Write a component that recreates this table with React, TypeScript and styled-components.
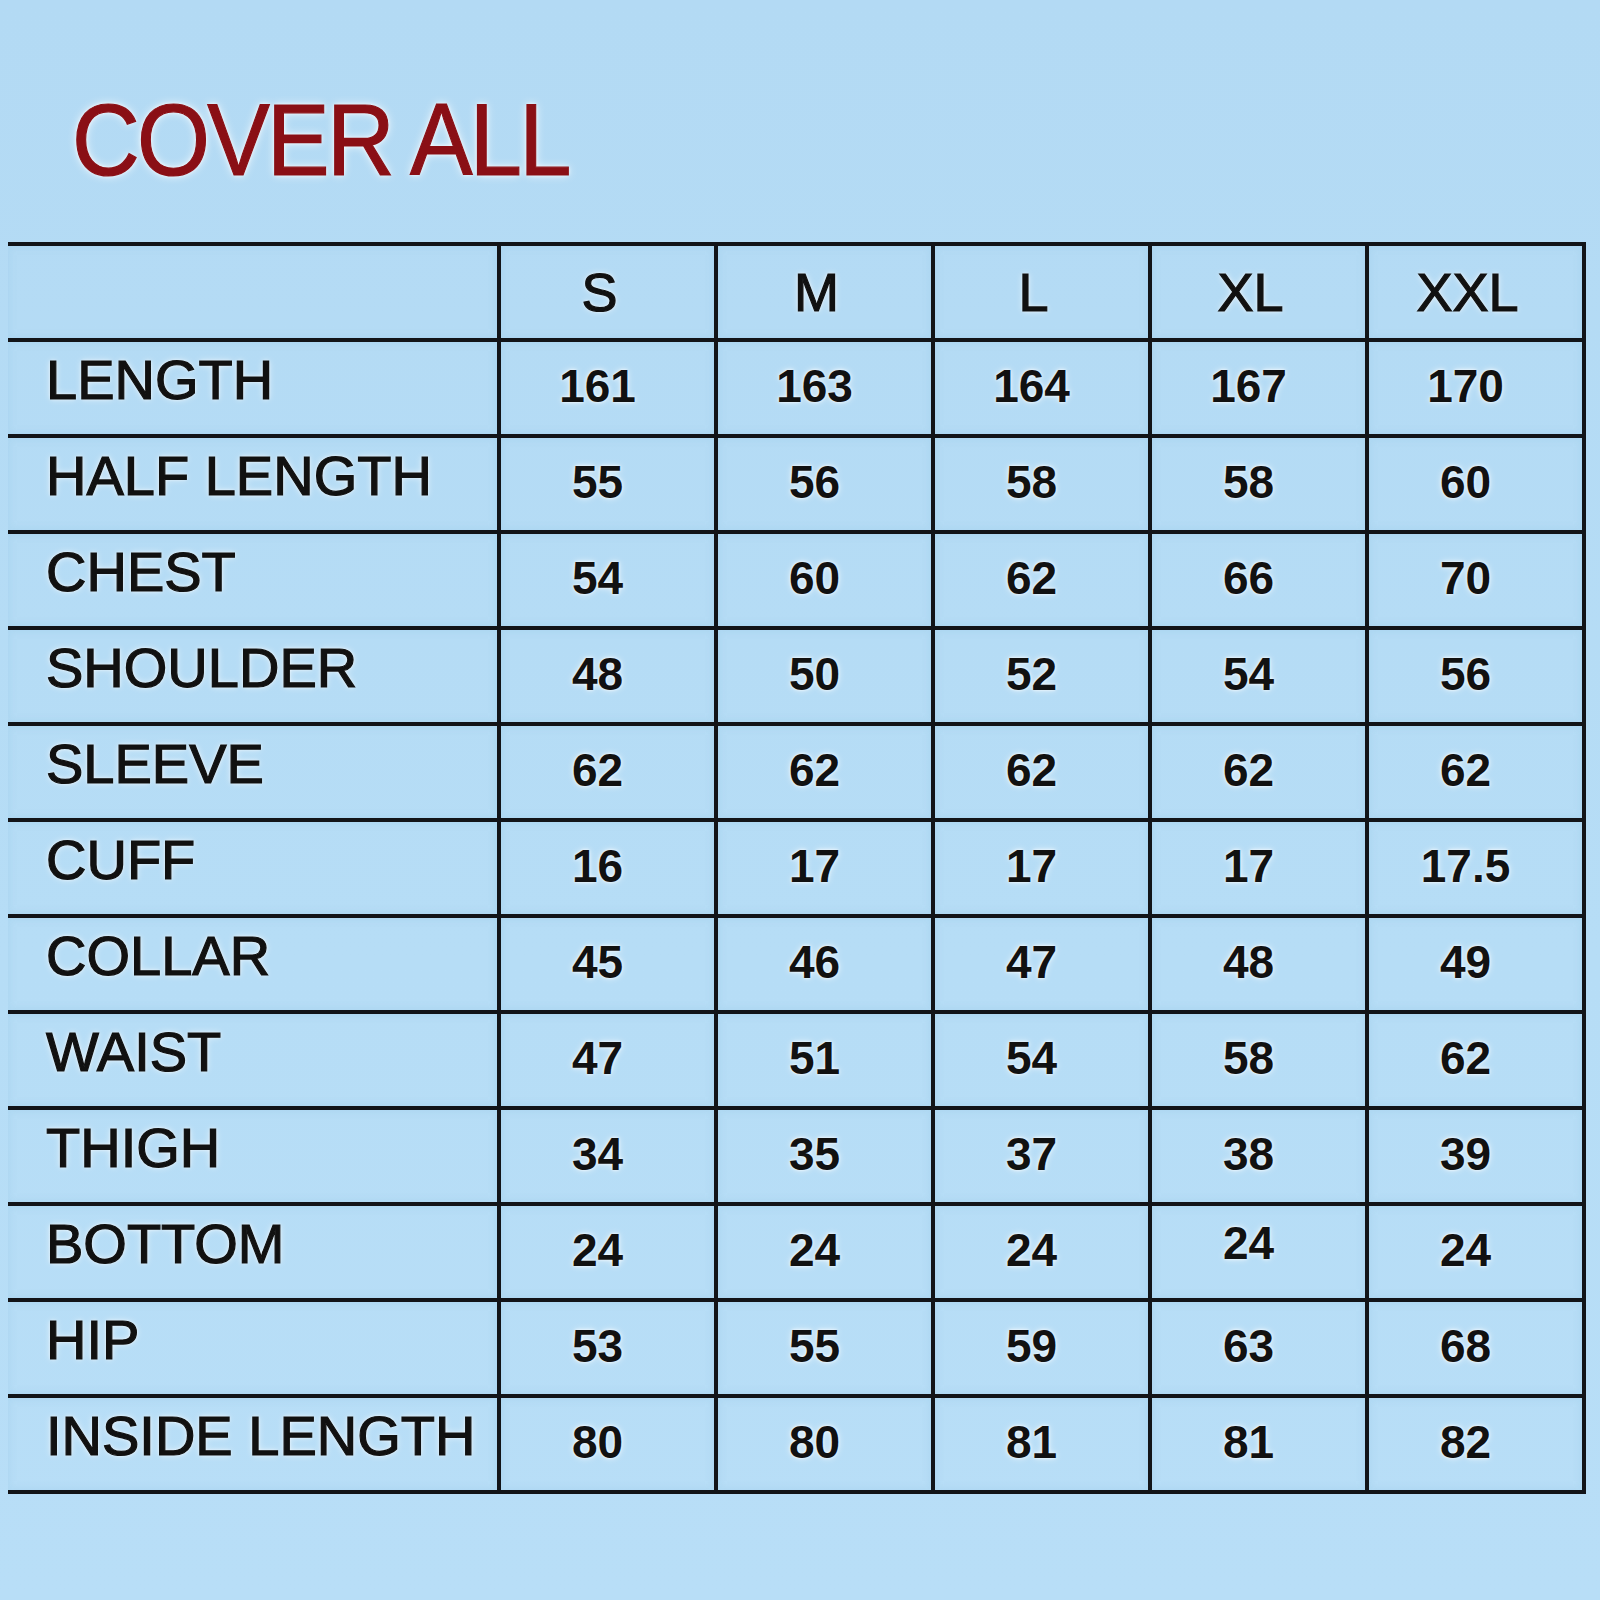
import React from 'react'
import styled, { createGlobalStyle } from 'styled-components'

const sizes = ['S', 'M', 'L', 'XL', 'XXL']

const rows: { label: string; values: string[]; lift?: number }[] = [
  { label: 'LENGTH', values: ['161', '163', '164', '167', '170'] },
  { label: 'HALF LENGTH', values: ['55', '56', '58', '58', '60'] },
  { label: 'CHEST', values: ['54', '60', '62', '66', '70'] },
  { label: 'SHOULDER', values: ['48', '50', '52', '54', '56'] },
  { label: 'SLEEVE', values: ['62', '62', '62', '62', '62'] },
  { label: 'CUFF', values: ['16', '17', '17', '17', '17.5'] },
  { label: 'COLLAR', values: ['45', '46', '47', '48', '49'] },
  { label: 'WAIST', values: ['47', '51', '54', '58', '62'] },
  { label: 'THIGH', values: ['34', '35', '37', '38', '39'] },
  { label: 'BOTTOM', values: ['24', '24', '24', '24', '24'], lift: 3 },
  { label: 'HIP', values: ['53', '55', '59', '63', '68'] },
  { label: 'INSIDE LENGTH', values: ['80', '80', '81', '81', '82'] },
]

export default () => {
  return (
    <Page>
      <GlobalStyle />
      <Title>COVER ALL</Title>
      <Chart>
        <thead>
          <tr>
            <Corner />
            {sizes.map((s) => (
              <SizeHead key={s}>{s}</SizeHead>
            ))}
          </tr>
        </thead>
        <tbody>
          {rows.map((row) => (
            <tr key={row.label}>
              <Label>{row.label}</Label>
              {row.values.map((v, i) => (
                <Value key={i} $raised={row.lift === i}>
                  {v}
                </Value>
              ))}
            </tr>
          ))}
        </tbody>
      </Chart>
    </Page>
  )
}

const GlobalStyle = createGlobalStyle`
  html, body {
    margin: 0;
    padding: 0;
    background: #b5dcf5;
  }
  body {
    font-family: "Liberation Sans", Arial, sans-serif;
  }
`

const halo = `0 0 3px rgba(255, 255, 255, 0.95), 0 0 7px rgba(255, 255, 255, 0.7)`
const line = `4px solid #121418`

const Page = styled.div`
  width: 1600px;
  height: 1600px;
  box-sizing: border-box;
  padding: 89px 0 0 8px;
  background: linear-gradient(180deg, #b3daf4 0%, #b6ddf6 60%, #b8def7 100%);
`

const Title = styled.h1`
  margin: 0 0 51px 64px;
  font-family: "Liberation Sans", Arial, sans-serif;
  font-size: 102px;
  line-height: 102px;
  font-weight: 400;
  letter-spacing: -3px;
  color: #8a0f15;
  -webkit-text-stroke: 1.2px #8a0f15;
  transform: scaleX(0.92);
  transform-origin: left center;
  text-shadow: 0 0 4px #fff, 0 0 10px rgba(255, 255, 255, 0.9);
`

const Chart = styled.table`
  border-collapse: collapse;
  table-layout: fixed;
  width: 1576px;

  td,
  th {
    height: 96px;
    padding: 0;
    border-top: ${line};
    border-bottom: ${line};
    box-sizing: border-box;
    box-shadow: inset 0 0 5px 3px rgba(160, 205, 235, 0.35);
  }

  th + th,
  td + td {
    border-left: ${line};
  }

  th:last-child,
  td:last-child {
    border-right: ${line};
  }
`

const Corner = styled.th`
  width: 491px;
`

const SizeHead = styled.th`
  width: 217px;
  padding-right: 16px !important;
  font-size: 54px;
  font-weight: 400;
  color: #111;
  text-align: center;
  vertical-align: middle;
  -webkit-text-stroke: 1.2px #111;
  text-shadow: ${halo};
`

const Label = styled.td`
  padding: 0 0 18px 38px !important;
  font-size: 56px;
  font-weight: 400;
  color: #111;
  white-space: nowrap;
  -webkit-text-stroke: 1.2px #111;
  text-shadow: ${halo};
`

const Value = styled.td<{ $raised?: boolean }>`
  padding: 0 20px ${({ $raised }) => ($raised ? '18px' : '4px')} 0 !important;
  font-size: 46px;
  font-weight: 700;
  color: #111;
  text-align: center;
  vertical-align: middle;
  text-shadow: ${halo};
`
